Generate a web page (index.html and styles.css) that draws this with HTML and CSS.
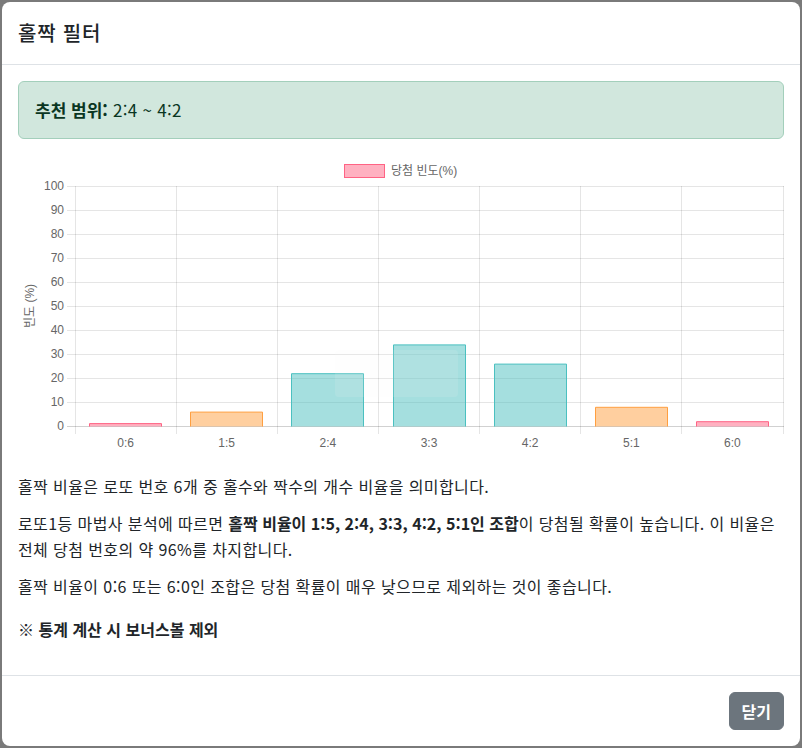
FILE: index.html
```html
<!DOCTYPE html>
<html lang="ko">
<head>
<meta charset="utf-8">
<title>홀짝 필터</title>
<link rel="stylesheet" href="styles.css">
</head>
<body>
<div class="modal">
  <div class="modal-header">
    <h5 class="modal-title">홀짝 필터</h5>
  </div>
  <div class="modal-body">
    <div class="alert"><strong>추천 범위:</strong> 2:4 ~ 4:2</div>
    <div class="chart">
      <svg class="chart-svg" width="766" height="303" viewBox="0 0 766 303">
        <g class="legend">
          <rect x="326.5" y="9.5" width="40" height="13" fill="rgba(255,99,132,0.5)" stroke="rgb(255,99,132)"/>
          <text x="373" y="20" class="lbl">당첨 빈도(%)</text>
        </g>
        <g class="grid" stroke="rgba(0,0,0,0.1)" stroke-width="1">
          <line x1="49" y1="31.5" x2="766" y2="31.5"/>
          <line x1="49" y1="55.5" x2="766" y2="55.5"/>
          <line x1="49" y1="79.5" x2="766" y2="79.5"/>
          <line x1="49" y1="103.5" x2="766" y2="103.5"/>
          <line x1="49" y1="127.5" x2="766" y2="127.5"/>
          <line x1="49" y1="151.5" x2="766" y2="151.5"/>
          <line x1="49" y1="175.5" x2="766" y2="175.5"/>
          <line x1="49" y1="199.5" x2="766" y2="199.5"/>
          <line x1="49" y1="223.5" x2="766" y2="223.5"/>
          <line x1="49" y1="247.5" x2="766" y2="247.5"/>
          <line x1="49" y1="271.5" x2="766" y2="271.5" stroke="rgba(0,0,0,0.18)"/>
          <line x1="57.5" y1="31" x2="57.5" y2="279"/>
          <line x1="158.5" y1="31" x2="158.5" y2="279"/>
          <line x1="259.5" y1="31" x2="259.5" y2="279"/>
          <line x1="360.5" y1="31" x2="360.5" y2="279"/>
          <line x1="461.5" y1="31" x2="461.5" y2="279"/>
          <line x1="562.5" y1="31" x2="562.5" y2="279"/>
          <line x1="663.5" y1="31" x2="663.5" y2="279"/>
          <line x1="765.5" y1="31" x2="765.5" y2="279"/>
        </g>
        <g class="ylabels lbl" text-anchor="end">
          <text x="46" y="35">100</text>
          <text x="46" y="59">90</text>
          <text x="46" y="83">80</text>
          <text x="46" y="107">70</text>
          <text x="46" y="131">60</text>
          <text x="46" y="155">50</text>
          <text x="46" y="179">40</text>
          <text x="46" y="203">30</text>
          <text x="46" y="227">20</text>
          <text x="46" y="251">10</text>
          <text x="46" y="275">0</text>
        </g>
        <text class="lbl" transform="translate(16,151) rotate(-90)" text-anchor="middle">빈도 (%)</text>
        <g class="bars">
          <rect x="71.5" y="268.6" width="72" height="2.9" fill="rgba(255,99,132,0.5)"/>
          <path d="M71.5 271.5 V268.6 H143.5 V271.5" fill="none" stroke="rgb(255,99,132)"/>
          <rect x="172.5" y="257.1" width="72" height="14.4" fill="rgba(255,159,64,0.5)"/>
          <path d="M172.5 271.5 V257.1 H244.5 V271.5" fill="none" stroke="rgb(255,159,64)"/>
          <rect x="273.5" y="218.7" width="72" height="52.8" fill="rgba(75,192,192,0.5)"/>
          <path d="M273.5 271.5 V218.7 H345.5 V271.5" fill="none" stroke="rgb(75,192,192)"/>
          <rect x="375.5" y="189.9" width="72" height="81.6" fill="rgba(75,192,192,0.5)"/>
          <path d="M375.5 271.5 V189.9 H447.5 V271.5" fill="none" stroke="rgb(75,192,192)"/>
          <rect x="476.5" y="209.1" width="72" height="62.4" fill="rgba(75,192,192,0.5)"/>
          <path d="M476.5 271.5 V209.1 H548.5 V271.5" fill="none" stroke="rgb(75,192,192)"/>
          <rect x="577.5" y="252.3" width="72" height="19.2" fill="rgba(255,159,64,0.5)"/>
          <path d="M577.5 271.5 V252.3 H649.5 V271.5" fill="none" stroke="rgb(255,159,64)"/>
          <rect x="678.5" y="266.7" width="72" height="4.8" fill="rgba(255,99,132,0.5)"/>
          <path d="M678.5 271.5 V266.7 H750.5 V271.5" fill="none" stroke="rgb(255,99,132)"/>
          <rect x="317" y="195" width="123" height="47" rx="4" fill="rgba(250,250,250,0.12)"/>
        </g>
        <g class="xlabels lbl" text-anchor="middle">
          <text x="107.6" y="292">0:6</text>
          <text x="208.7" y="292">1:5</text>
          <text x="309.9" y="292">2:4</text>
          <text x="411" y="292">3:3</text>
          <text x="512.1" y="292">4:2</text>
          <text x="613.3" y="292">5:1</text>
          <text x="714.4" y="292">6:0</text>
        </g>
      </svg>
    </div>
    <p class="desc">홀짝 비율은 로또 번호 6개 중 홀수와 짝수의 개수 비율을 의미합니다.</p>
    <p class="desc">로또1등 마법사 분석에 따르면 <strong>홀짝 비율이 1:5, 2:4, 3:3, 4:2, 5:1인 조합</strong>이 당첨될 확률이 높습니다. 이 비율은 전체 당첨 번호의 약 96%를 차지합니다.</p>
    <p class="desc">홀짝 비율이 0:6 또는 6:0인 조합은 당첨 확률이 매우 낮으므로 제외하는 것이 좋습니다.</p>
    <p class="desc note"><strong>※ 통계 계산 시 보너스볼 제외</strong></p>
  </div>
  <div class="modal-footer">
    <button class="btn" type="button">닫기</button>
  </div>
</div>
</body>
</html>
```

FILE: styles.css
```css
* { box-sizing: border-box; }
html, body { height: 100%; }
body {
  margin: 0;
  padding: 2px;
  background: #7a7a7a;
  font-family: "Noto Sans CJK KR", "Noto Sans", sans-serif;
  color: #212529;
  font-size: 16px;
}
.modal {
  background: #fff;
  border-radius: 8px;
  height: 744px;
  display: flex;
  flex-direction: column;
  overflow: hidden;
}
.modal-header {
  padding: 16px;
  border-bottom: 1px solid #dee2e6;
}
.modal-title {
  margin: 0;
  font-size: 20px;
  font-weight: 500;
  line-height: 30px;
  letter-spacing: 0.8px;
}
.modal-body {
  flex: 1;
  padding: 16px;
}
.alert {
  background: #d1e7dd;
  border: 1px solid #a3cfbb;
  color: #0a3622;
  border-radius: 6px;
  padding: 16px;
  font-size: 17px;
  line-height: 24px;
  margin-bottom: 16px;
  letter-spacing: 0.3px;
}
.alert strong { font-weight: 700; letter-spacing: 0; }
.chart {
  height: 302px;
  margin-bottom: 16px;
}
.chart-svg { display: block; overflow: visible; }
.lbl {
  font-family: "Liberation Sans", "Noto Sans CJK KR", sans-serif;
  font-size: 12px;
  fill: #666;
}
.desc {
  margin: 0 0 11px;
  line-height: 26px;
  letter-spacing: 0.4px;
  word-break: keep-all;
}
.desc strong { font-weight: 700; letter-spacing: 0; }
.note { margin-top: 17px; }
.modal-footer {
  border-top: 1px solid #dee2e6;
  padding: 16px;
  display: flex;
  justify-content: flex-end;
}
.btn {
  background: #6c757d;
  border: 1px solid #6c757d;
  color: #fff;
  border-radius: 6px;
  padding: 6px 12px;
  font-family: inherit;
  font-size: 16px;
  font-weight: 700;
  line-height: 24px;
}
```
